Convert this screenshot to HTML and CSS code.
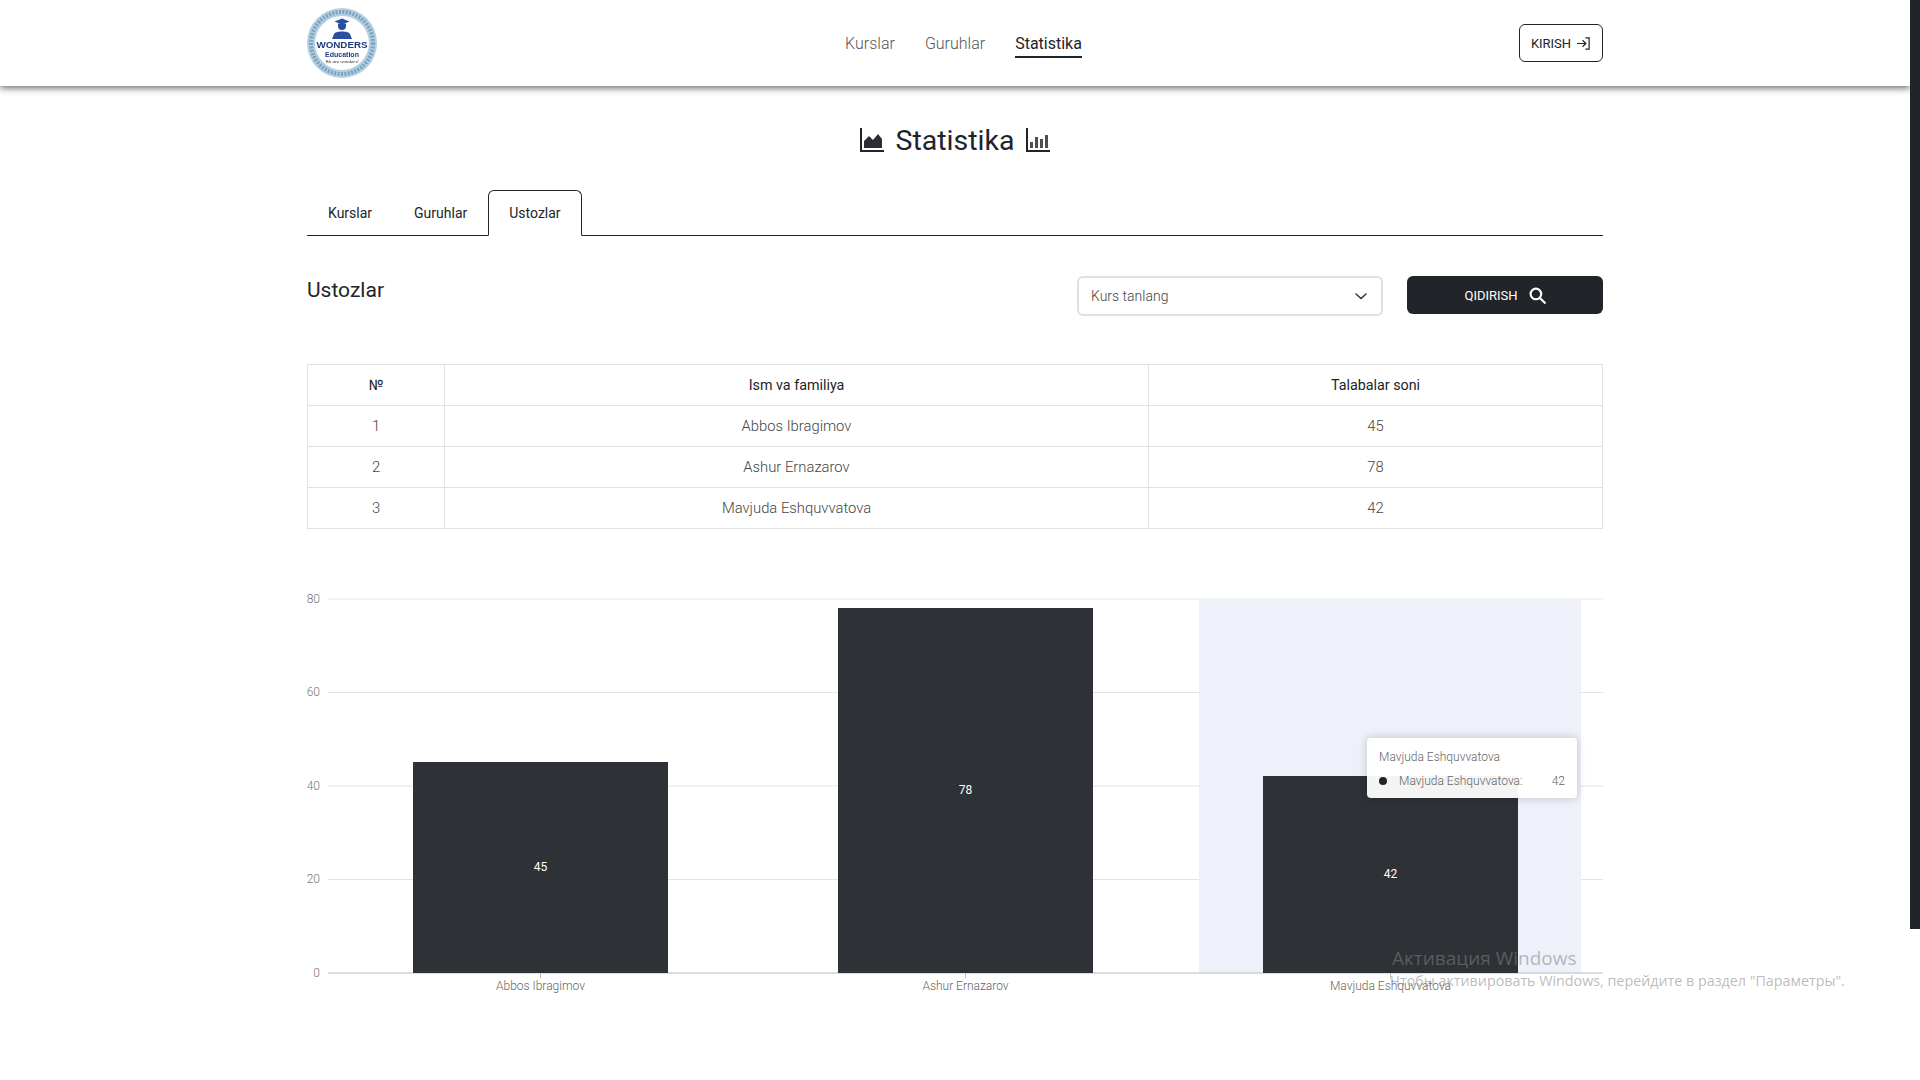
FILE: index.html
```html
<!DOCTYPE html>
<html lang="uz">

<head>
    <meta charset="UTF-8">
    <title>Statistika</title>
    <meta name="viewport" content="width=device-width, initial-scale=1.0">
    <link rel="stylesheet" href="styles.css">
</head>

<body>
    <div class="app">
        <div class="page">
            <header class="topbar">
                <div class="container topbar-row">
                    <svg class="logo" viewBox="0 0 70 70" aria-label="Wonders Education">
                        <circle cx="35" cy="35" r="35" fill="#b4cfe2" />
                        <circle cx="35" cy="35" r="31" fill="none" stroke="#7ba2bf" stroke-width="4" stroke-dasharray="2 1.4" />
                        <circle cx="35" cy="35" r="27" fill="#fff" />
                        <path d="M35 10.500l7.500 3-7.500 3-7.500-3z" fill="#2a4f9c" />
                        <path d="M31 15.500h8v2.500a4 4 0 0 1-8 0z" fill="#2a4f9c" />
                        <path d="M27 26c1-3.500 15-3.500 16 0l2 5H25z" fill="#2a4f9c" />
                        <text class="logo-big" x="35" y="40" text-anchor="middle">WONDERS</text>
                        <text class="logo-mid" x="35" y="48.500" text-anchor="middle">Education</text>
                        <text class="logo-small" x="35" y="54.500" text-anchor="middle">We are wonders!</text>
                    </svg>
                    <nav class="mainnav">
                        <a href="#">Kurslar</a>
                        <a href="#">Guruhlar</a>
                        <a href="#" class="current">Statistika</a>
                    </nav>
                    <button class="login-btn">KIRISH
                        <svg viewBox="0 0 16 16" width="15" height="15" fill="none" stroke="currentColor" stroke-width="1.3">
                            <path d="M1 8h9M7 4.500L10.500 8 7 11.500M10 2h4v12h-4" />
                        </svg>
                    </button>
                </div>
            </header>

            <main class="container">
                <h1 class="page-title">
                    <svg viewBox="0 0 24 24" width="24" height="24">
                        <path d="M1 0v23h23" fill="none" stroke="#212529" stroke-width="2" />
                        <path d="M4 20v-7l5-5 4 4 5-6 4 5v9z" fill="#2b2f33" />
                    </svg>
                    Statistika
                    <svg viewBox="0 0 24 24" width="24" height="24">
                        <path d="M1 0v23h23" fill="none" stroke="#212529" stroke-width="2" />
                        <path d="M4 20v-6h3v6zM9 20V9h3v11zM14 20v-9h3v9zM19 20V7h3v13z" fill="#4c5053" />
                    </svg>
                </h1>

                <div class="tabs">
                    <a href="#" class="tab">Kurslar</a>
                    <a href="#" class="tab">Guruhlar</a>
                    <a href="#" class="tab active">Ustozlar</a>
                </div>

                <section class="filter-row">
                    <h2>Ustozlar</h2>
                    <div class="select-box">
                        <span>Kurs tanlang</span>
                        <svg viewBox="0 0 16 16" width="16" height="16" fill="none" stroke="#343a40" stroke-width="1.6" stroke-linecap="round" stroke-linejoin="round">
                            <path d="M3 6l5 4.500L13 6" />
                        </svg>
                    </div>
                    <button class="search-btn">QIDIRISH
                        <svg viewBox="0 0 16 16" width="17" height="17" fill="none" stroke="#fff" stroke-width="2">
                            <circle cx="6.500" cy="6.500" r="5" />
                            <path d="M10.500 10.500l5 5" />
                        </svg>
                    </button>
                </section>

                <table class="stats-table">
                    <thead>
                        <tr>
                            <th class="col-num">№</th>
                            <th class="col-name">Ism va familiya</th>
                            <th>Talabalar soni</th>
                        </tr>
                    </thead>
                    <tbody>
                        <tr><td>1</td><td>Abbos Ibragimov</td><td>45</td></tr>
                        <tr><td>2</td><td>Ashur Ernazarov</td><td>78</td></tr>
                        <tr><td>3</td><td>Mavjuda Eshquvvatova</td><td>42</td></tr>
                    </tbody>
                </table>

                <div class="chart">
                    <svg viewBox="0 0 1296 420" width="1296" height="420">
                        <path class="grid" d="M21 19h1275M21 112.500h1275M21 206h1275M21 299.500h1275" />
                        <rect class="band" x="892" y="19" width="382" height="374" />
                        <path class="axis" d="M21 393h1275M233.500 393v5M658.500 393v5M1083.500 393v5" />
                        <g class="y-labels">
                            <text x="13" y="23">80</text>
                            <text x="13" y="116">60</text>
                            <text x="13" y="210">40</text>
                            <text x="13" y="303">20</text>
                            <text x="13" y="397">0</text>
                        </g>
                        <rect class="bar" x="106" y="182" width="255" height="211" />
                        <rect class="bar" x="531" y="28" width="255" height="365" />
                        <rect class="bar" x="956" y="196" width="255" height="197" />
                        <g class="bar-labels">
                            <text x="233.500" y="291">45</text>
                            <text x="658.500" y="214">78</text>
                            <text x="1083.500" y="298">42</text>
                        </g>
                        <g class="x-labels">
                            <text x="233.500" y="410">Abbos Ibragimov</text>
                            <text x="658.500" y="410">Ashur Ernazarov</text>
                            <text x="1083.500" y="410">Mavjuda Eshquvvatova</text>
                        </g>
                    </svg>
                    <div class="tooltip">
                        <div class="tooltip-title">Mavjuda Eshquvvatova</div>
                        <div class="tooltip-row">
                            <span class="dot"></span>
                            <span class="tooltip-name">Mavjuda Eshquvvatova:</span>
                            <span class="tooltip-value">42</span>
                        </div>
                    </div>
                </div>
            </main>
        </div>

        <div class="rail"><div class="thumb"></div></div>

        <div class="watermark">
            <div class="wm-title">Активация Windows</div>
            <div class="wm-text">Чтобы активировать Windows, перейдите в раздел "Параметры".</div>
        </div>
    </div>
</body>

</html>
```

FILE: styles.css
```css
* {
    box-sizing: border-box;
}

html,
body {
    margin: 0;
    height: 100%;
    overflow: hidden;
}

body {
    font-family: Roboto, "Noto Sans", sans-serif;
    font-weight: 300;
    color: #212529;
    background-color: #fff;
}

a {
    color: inherit;
    text-decoration: none;
}

.app {
    display: flex;
    height: 100vh;
    position: relative;
}

.page {
    flex: 1;
    min-width: 0;
}

.container {
    width: 1296px;
    margin: 0 auto;
}

.rail {
    width: 10px;
    background-color: #fff;
}

.thumb {
    height: 929px;
    background-color: #212529;
}

/* header */
.topbar {
    height: 86px;
    background-color: #fff;
    box-shadow: 0 2px 7px rgba(0, 0, 0, 0.6);
}

.topbar-row {
    display: flex;
    align-items: center;
    justify-content: space-between;
    height: 100%;
}

.logo {
    width: 70px;
    height: 70px;
    filter: blur(0.3px);
}

.logo-big {
    font: 700 9.800px "Liberation Sans", sans-serif;
    fill: #1f3a7a;
}

.logo-mid {
    font: 700 7px "Liberation Sans", sans-serif;
    fill: #1f3a7a;
}

.logo-small {
    font: italic 400 5px "Liberation Serif", serif;
    fill: #222;
}

.mainnav {
    display: flex;
    gap: 30px;
    margin-left: 31px;
    font-size: 16px;
    color: #555;
}

.mainnav a {
    padding: 5px 0 3px;
    border-bottom: 2px solid transparent;
}

.mainnav .current {
    color: #212529;
    font-weight: 400;
    border-bottom-color: #212529;
}

.login-btn {
    display: flex;
    align-items: center;
    justify-content: center;
    gap: 5px;
    width: 84px;
    height: 38px;
    padding: 0;
    font: inherit;
    font-size: 13px;
    font-weight: 400;
    color: #212529;
    background-color: #fff;
    border: 1px solid #212529;
    border-radius: 6px;
}

/* title and tabs */
.page-title {
    display: flex;
    align-items: center;
    justify-content: center;
    gap: 12px;
    height: 40px;
    margin: 34px 0 30px;
    font-size: 28.500px;
    font-weight: 400;
}

.tabs {
    display: flex;
    height: 46px;
    border-bottom: 1px solid #212529;
}

.tab {
    height: 46px;
    padding: 0 20px;
    font-size: 14px;
    font-weight: 400;
    line-height: 44px;
    border: 1px solid transparent;
    border-radius: 6px 6px 0 0;
}

.tab.active {
    background-color: #fff;
    border-color: #212529 #212529 #fff;
}

/* filter */
.filter-row {
    display: flex;
    align-items: flex-start;
    margin-top: 40px;
}

.filter-row h2 {
    flex: 1;
    margin: 0;
    font-size: 21px;
    font-weight: 400;
    line-height: 29px;
}

.select-box {
    display: flex;
    align-items: center;
    justify-content: space-between;
    width: 306px;
    height: 40px;
    padding: 0 12px;
    font-size: 14px;
    color: #444;
    border: 2px solid #dee2e6;
    border-radius: 6px;
}

.search-btn {
    display: flex;
    align-items: center;
    justify-content: center;
    gap: 11px;
    width: 196px;
    height: 38px;
    margin-left: 24px;
    font: inherit;
    font-size: 13px;
    font-weight: 400;
    color: #fff;
    background-color: #212529;
    border: none;
    border-radius: 6px;
}

/* table */
.stats-table {
    width: 100%;
    margin-top: 48px;
    border-collapse: collapse;
    table-layout: fixed;
    font-size: 14.800px;
    text-align: center;
}

.stats-table th,
.stats-table td {
    height: 41px;
    padding: 0;
    border: 1px solid #dee2e6;
}

.stats-table th {
    font-size: 14.300px;
    font-weight: 400;
}

.stats-table td {
    color: #444;
}

.col-num {
    width: 137px;
}

.col-name {
    width: 704px;
}

/* chart */
.chart {
    position: relative;
    height: 420px;
    margin-top: 51px;
}

.chart svg {
    display: block;
}

.chart text {
    font-size: 12px;
    font-weight: 300;
}

.grid {
    fill: none;
    stroke: #e4e4e4;
    stroke-width: 1;
}

.band {
    fill: #eef1f9;
}

.axis {
    fill: none;
    stroke: #bbb;
    stroke-width: 1;
}

.bar {
    fill: #2e3135;
}

.y-labels text {
    fill: #777;
    text-anchor: end;
}

.bar-labels text {
    fill: #fff;
    font-weight: 400;
    text-anchor: middle;
}

.x-labels text {
    fill: #666;
    text-anchor: middle;
}

.tooltip {
    position: absolute;
    left: 1060px;
    top: 158px;
    width: 210px;
    height: 60px;
    padding: 10px 12px;
    font-size: 12px;
    color: #666;
    background-color: rgba(255, 255, 255, 0.95);
    border-radius: 4px;
    box-shadow: 0 0 10px rgba(0, 0, 0, 0.2);
}

.tooltip-title {
    line-height: 18px;
}

.tooltip-row {
    display: flex;
    align-items: center;
    margin-top: 6px;
    line-height: 18px;
}

.dot {
    width: 8px;
    height: 8px;
    margin-right: 12px;
    background-color: #212529;
    border-radius: 50%;
}

.tooltip-name {
    flex: 1;
}

/* windows watermark */
.watermark {
    position: absolute;
    left: 1390px;
    top: 945px;
    font-family: "Open Sans", sans-serif;
    font-weight: 400;
    color: rgba(130, 130, 130, 0.55);
    pointer-events: none;
    white-space: nowrap;
}

.wm-title {
    margin-left: 2px;
    font-size: 19px;
    line-height: 26px;
}

.wm-text {
    font-size: 14.300px;
    line-height: 19px;
}
```
